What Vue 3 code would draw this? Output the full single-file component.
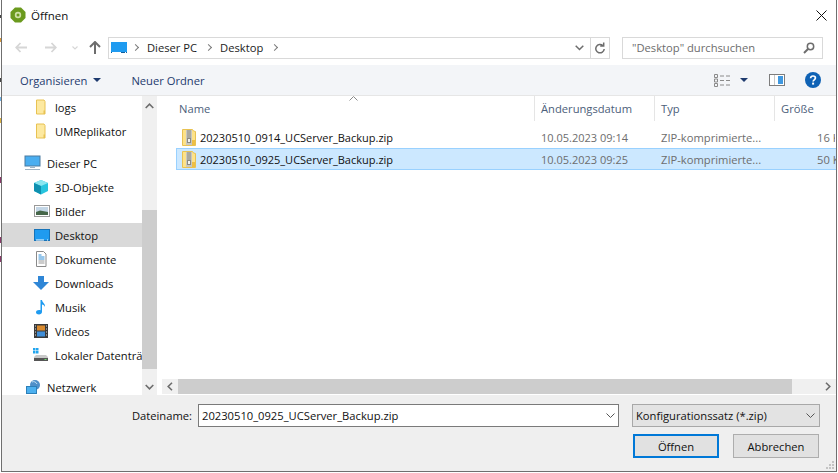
<template>
  <div class="screen">
    <div class="dialog">
      <div class="titlebar">
        <svg class="app-icon" width="16" height="16" viewBox="0 0 16 16">
          <path d="M5 .5h6L15.500 5v6L11 15.500H5L.5 11V5z" fill="#6b9a1e" />
          <circle cx="8" cy="8" r="3.200" fill="#cfe0a8" />
          <circle cx="8" cy="8" r="1.500" fill="#6b9a1e" />
        </svg>
        <span class="title">Öffnen</span>
        <svg class="close" width="11" height="11" viewBox="0 0 11 11">
          <path d="M.5.5l10 10M10.500.5l-10 10" stroke="#111" stroke-width="1" fill="none" />
        </svg>
      </div>

      <div class="navbar">
        <svg class="nav-arrow" width="12" height="11" viewBox="0 0 12 11">
          <path d="M5.500 1L1.200 5.500 5.500 10M1.500 5.500H12" fill="none" stroke="#d6d6d6" stroke-width="1.800" />
        </svg>
        <svg class="nav-arrow fwd" width="12" height="11" viewBox="0 0 12 11">
          <path d="M6.500 1l4.300 4.500L6.500 10M10.500 5.500H0" fill="none" stroke="#d6d6d6" stroke-width="1.800" />
        </svg>
        <svg class="nav-drop" width="6" height="4" viewBox="0 0 6 4">
          <path d="M.5.500L3 3 5.500.5" fill="none" stroke="#d6d6d6" stroke-width="1.100" />
        </svg>
        <svg class="nav-up" width="12" height="13" viewBox="0 0 12 13">
          <path d="M1 6l5-5 5 5M6 1.500V13" fill="none" stroke="#6d6d6d" stroke-width="2" />
        </svg>
        <div class="address">
          <svg class="desk-icon" width="16" height="12" viewBox="0 0 16 12">
            <rect width="16" height="11" fill="#1f9bf0" />
            <rect y="10" width="16" height="1" fill="#0f5f9c" />
            <rect x="1" y="10" width="9" height="1" fill="#fff" />
            <rect x="14" y="10" width="1" height="1" fill="#fff" />
          </svg>
          <span class="crumb-sep first"></span>
          <span class="crumb">Dieser PC</span>
          <span class="crumb-sep"></span>
          <span class="crumb">Desktop</span>
          <span class="crumb-sep"></span>
          <span class="address-space"></span>
          <svg class="addr-drop" width="9" height="6" viewBox="0 0 9 6">
            <path d="M.7.700l3.800 3.800L8.300.7" fill="none" stroke="#6d6d6d" stroke-width="1.500" />
          </svg>
          <span class="addr-refresh">
            <svg width="10" height="12" viewBox="0 0 10 12">
              <path d="M7.800 3.500A4.200 4.200 0 1 0 9.200 7M8.700 .5V4H5.200" fill="none" stroke="#6d6d6d" stroke-width="1.500" />
            </svg>
          </span>
        </div>
        <div class="search">
          <span>"Desktop" durchsuchen</span>
          <svg width="12" height="12" viewBox="0 0 12 12">
            <circle cx="7.500" cy="4.500" r="3.200" fill="none" stroke="#6d6d6d" stroke-width="1.500" />
            <path d="M5 7L1 11" stroke="#6d6d6d" stroke-width="2" />
          </svg>
        </div>
      </div>

      <div class="toolbar">
        <span class="tool-btn">Organisieren<i class="caret"></i></span>
        <span class="tool-btn new-folder">Neuer Ordner</span>
        <span class="tool-space"></span>
        <svg class="view-icon" width="17" height="13" viewBox="0 0 17 13">
          <path d="M.5.500h3v3h-3zM.5 5h3v3h-3zM.5 9.500h3v3h-3z" fill="none" stroke="#8a8a8a" />
          <path d="M6 2h4M12 2h4M6 6.500h4M12 6.500h4M6 11h4M12 11h4" stroke="#8a8a8a" />
        </svg>
        <i class="caret view-caret"></i>
        <svg class="pane-icon" width="16" height="12" viewBox="0 0 16 12">
          <rect x=".5" y=".5" width="15" height="11" fill="#fff" stroke="#7d7d7d" />
          <rect x="9" y="2" width="5" height="8" fill="#3f98e0" />
          <path d="M5.500 1v10" stroke="#c8c8c8" />
        </svg>
        <svg class="help-icon" width="16" height="16" viewBox="0 0 16 16">
          <circle cx="8" cy="8" r="8" fill="#0f62b5" />
          <path d="M5.600 6.200C5.700 4.700 6.700 4 8 4c1.400 0 2.400.8 2.400 2 0 1.800-2.300 1.800-2.300 3.600" fill="none" stroke="#fff" stroke-width="1.700" />
          <rect x="7.100" y="10.600" width="2" height="2" fill="#fff" />
        </svg>
      </div>

      <div class="main">
        <div class="tree">
          <div class="tree-items">
            <div v-for="item in treeItems" :key="item.label" class="tree-item" :class="[item.kind, { active: item.active }]">
              <svg class="tree-icon" width="18" height="16" viewBox="0 0 18 16" v-html="icons[item.icon]"></svg>
              <span>{{ item.label }}</span>
            </div>
          </div>
          <div class="tree-scroll">
            <svg class="scroll-btn" width="9" height="6" viewBox="0 0 9 6">
              <path d="M.7 5l3.800-3.800L8.300 5" fill="none" stroke="#6d6d6d" stroke-width="1.600" />
            </svg>
            <div class="tree-track"><div class="tree-thumb"></div></div>
            <svg class="scroll-btn" width="9" height="6" viewBox="0 0 9 6">
              <path d="M.7 1l3.800 3.800L8.300 1" fill="none" stroke="#6d6d6d" stroke-width="1.600" />
            </svg>
          </div>
        </div>

        <div class="files">
          <svg class="sort" width="9" height="5" viewBox="0 0 9 5">
            <path d="M.5 4.500l4-4 4 4" fill="none" stroke="#8a8a8a" />
          </svg>
          <div class="file-head">
            <div v-for="col in columns" :key="col.label" class="col" :class="col.cls">{{ col.label }}</div>
          </div>
          <div class="file-rows">
            <div v-for="file in files" :key="file.name" class="file" :class="{ selected: file.selected }">
              <div class="col c-name">
                <svg width="14" height="17" viewBox="0 0 14 17">
                  <path d="M.5.500h10l1 1.500 2 .5v14H.5z" fill="#fde28a" stroke="#e8c252" />
                  <rect x="10" y="11" width="3" height="5" fill="#eebf45" />
                  <rect x="4" y="1" width="6" height="15" fill="#c9c8c0" />
                  <path d="M5 2h4M5 4h4M5 6h4M5 8h4" stroke="#8b8a80" />
                  <rect x="5.500" y="9.500" width="3" height="4" fill="#f2f2ee" stroke="#8b8a80" />
                </svg>
                <span>{{ file.name }}</span>
              </div>
              <div class="col c-date">{{ file.date }}</div>
              <div class="col c-type">ZIP-komprimierte...</div>
              <div class="col c-size">{{ file.size }}</div>
            </div>
          </div>
          <div class="hscroll">
            <svg class="h-btn" width="6" height="9" viewBox="0 0 6 9">
              <path d="M5 .7L1.200 4.500 5 8.300" fill="none" stroke="#6d6d6d" stroke-width="1.600" />
            </svg>
            <div class="h-track"><div class="h-thumb"></div></div>
            <svg class="h-btn" width="6" height="9" viewBox="0 0 6 9">
              <path d="M1 .7l3.800 3.800L1 8.300" fill="none" stroke="#6d6d6d" stroke-width="1.600" />
            </svg>
          </div>
        </div>
      </div>

      <div class="footer">
        <div class="file-line">
          <label>Dateiname:</label>
          <div class="name-input">
            <span>20230510_0925_UCServer_Backup.zip</span>
            <svg width="9" height="5" viewBox="0 0 9 5">
              <path d="M.5.500l4 4 4-4" fill="none" stroke="#555" />
            </svg>
          </div>
          <div class="filter">
            <span>Konfigurationssatz (*.zip)</span>
            <svg width="9" height="5" viewBox="0 0 9 5">
              <path d="M.5.500l4 4 4-4" fill="none" stroke="#555" />
            </svg>
          </div>
        </div>
        <div class="buttons">
          <button class="primary">Öffnen</button>
          <button>Abbrechen</button>
        </div>
        <svg class="grip" width="8" height="8" viewBox="0 0 8 8">
          <path d="M6 0h2v2H6zM3 3h2v2H3zM6 3h2v2H6zM0 6h2v2H0zM3 6h2v2H3zM6 6h2v2H6z" fill="#c4c4c4" />
        </svg>
      </div>
    </div>
  </div>
</template>

<script setup>
const icons = {
  folder: '<path d="M4.500 1h7.500l1 1.500V15h-8.500z" fill="#fde9a0" stroke="#e8c252"/><path d="M11.500 11.500h1.500V15h-1.500z" fill="#e8c252"/>',
  pc: '<rect x="1" y="1" width="15" height="10" fill="#4aaef0" stroke="#4a7aa0"/><path d="M6 12h5v1H6zM1 14h15v1H1z" fill="#a0b4c4"/>',
  cube: '<path d="M9 1l7 3v8l-7 3.500L2 12V4z" fill="#27c4de"/><path d="M9 1l7 3-7 3-7-3z" fill="#8be6f0"/><path d="M2 4l7 3v8.500L2 12z" fill="#0f90b0"/>',
  pics: '<rect x="2.500" y="2.500" width="15" height="11" fill="#fff" stroke="#999"/><rect x="4" y="4" width="12" height="8" fill="#c3d6e6"/><path d="M4 9l4-1.500 8 1.500v3H4z" fill="#46674a"/>',
  desk: '<rect x="2.500" y="2.500" width="15" height="11" fill="#1f9bf0" stroke="#1673b8"/><path d="M4 13h8M15 13h1" stroke="#fff"/>',
  doc: '<path d="M4.500.500h7l2.500 2.500v12.500H4.500z" fill="#fff" stroke="#8a8a8a"/><path d="M6.500 4h3M6.500 6h6M6.500 8h6" stroke="#2f8ed8"/><path d="M6.500 10h6M6.500 12h6" stroke="#999"/>',
  down: '<path d="M6 1h6v6h5L9 15 1 7h5z" fill="#2f86d6"/>',
  music: '<path d="M8.500 1h1.500c.3 3 3.500 3.500 3 7-.5-1.500-1.700-2.200-3-2.500V13c0 1.600-1.500 2.500-3 2.500S4 14.500 4 13.200s1.500-2.200 3-2.200c.6 0 1.100.1 1.500.3z" fill="#1f9bf0"/>',
  video: '<rect x="2" y="1" width="14" height="14" fill="#3a3a3a"/><rect x="5" y="2.500" width="8" height="5" fill="#d98a2e"/><rect x="5" y="8.500" width="8" height="5" fill="#3f8ed8"/><path d="M3 3h1M3 6h1M3 9h1M3 12h1M14 3h1M14 6h1M14 9h1M14 12h1" stroke="#ddd"/>',
  drive: '<path d="M1 1h2.500v2.500H1zM4 1h2.500v2.500H4zM1 4h2.500v2.500H1zM4 4h2.500v2.500H4z" fill="#22a5ee"/><path d="M2 10l2-2h10l2 2v4H2z" fill="#c9c9c9"/><rect x="2" y="11" width="14" height="3" fill="#555"/><rect x="12.500" y="12" width="2" height="1" fill="#6fe06f"/>',
  net: '<circle cx="11" cy="6" r="5" fill="#4f8fc8"/><path d="M8 3c2-1 4 0 5 2" stroke="#bfe0f5" fill="none"/><rect x="2.500" y="7.500" width="10" height="7" fill="#4cb0ef" stroke="#2c7fb8"/>'
}

const treeItems = [
  { label: 'logs', icon: 'folder', kind: 'child' },
  { label: 'UMReplikator', icon: 'folder', kind: 'child' },
  { label: 'Dieser PC', icon: 'pc', kind: 'root gap' },
  { label: '3D-Objekte', icon: 'cube', kind: 'child' },
  { label: 'Bilder', icon: 'pics', kind: 'child' },
  { label: 'Desktop', icon: 'desk', kind: 'child', active: true },
  { label: 'Dokumente', icon: 'doc', kind: 'child' },
  { label: 'Downloads', icon: 'down', kind: 'child' },
  { label: 'Musik', icon: 'music', kind: 'child' },
  { label: 'Videos', icon: 'video', kind: 'child' },
  { label: 'Lokaler Datenträ', icon: 'drive', kind: 'child' },
  { label: 'Netzwerk', icon: 'net', kind: 'root gap' }
]

const columns = [
  { label: 'Name', cls: 'c-name' },
  { label: 'Änderungsdatum', cls: 'c-date' },
  { label: 'Typ', cls: 'c-type' },
  { label: 'Größe', cls: 'c-size' }
]

const files = [
  { name: '20230510_0914_UCServer_Backup.zip', date: '10.05.2023 09:14', size: '16 KB' },
  { name: '20230510_0925_UCServer_Backup.zip', date: '10.05.2023 09:25', size: '50 KB', selected: true }
]
</script>

<style>
html, body {
  margin: 0;
  background: #fff;
  overflow: hidden;
}
</style>

<style scoped>
/* the desktop behind the dialog only shows as a 1px sliver on the left */
.screen {
  width: 838px;
  height: 473px;
  overflow: hidden;
  background:
    linear-gradient(#fff 15px, #444 15px 18px, #fff 18px 38px, #d99a3c 38px 42px, #fff 42px 78px, #444 78px 82px, #fff 82px 97px, #6fb3e8 97px 101px, #fff 101px 118px, #d9b040 118px 123px, #fff 123px 177px, #8a3a6a 177px 183px, #fff 183px 237px, #8a3a6a 237px 243px, #fff 243px 256px, #8a3a6a 256px 262px, #fff 262px) left top / 1px 100% no-repeat,
    #fff;
  font-family: "Open Sans", "Noto Sans", sans-serif;
  font-size: 11.2px;
  color: #111;
}

.dialog {
  width: 836px;
  height: 472px;
  margin-left: 1px;
  box-sizing: border-box;
  background: #fff;
  border: 1px solid #6f6f6f;
  border-top: 0;
  display: flex;
  flex-direction: column;
  overflow: hidden;
}

.titlebar {
  height: 30px;
  display: flex;
  align-items: center;
  padding-left: 8px;
  flex: none;
}

.title {
  margin-left: 5px;
  font-size: 11.5px;
}

.close {
  margin-left: auto;
  margin-right: 9px;
}

.navbar {
  height: 35px;
  flex: none;
  display: flex;
  align-items: center;
  padding-left: 13px;
}

.nav-arrow {
  margin-right: 18px;
}

.nav-arrow.fwd {
  margin-right: 15px;
}

.nav-drop {
  margin-right: 11px;
}

.nav-up {
  margin-right: 7px;
}

.address {
  width: 502px;
  height: 22px;
  box-sizing: border-box;
  border: 1px solid #d9d9d9;
  display: flex;
  align-items: center;
  padding-left: 2px;
}

.crumb {
  color: #1c1c1c;
}

.crumb-sep {
  width: 4px;
  height: 4px;
  border-top: 1.500px solid #7a7a7a;
  border-right: 1.500px solid #7a7a7a;
  transform: rotate(45deg);
  margin: 0 9px 0 9px;
}

.crumb-sep.first {
  margin-left: 6px;
}

.address-space {
  flex: 1;
}

.addr-drop {
  margin-right: 6px;
}

.addr-refresh {
  width: 18px;
  height: 20px;
  border-left: 1px solid #d9d9d9;
  display: flex;
  align-items: center;
  justify-content: center;
}

.search {
  width: 201px;
  height: 22px;
  margin-left: 12px;
  box-sizing: border-box;
  border: 1px solid #d9d9d9;
  display: flex;
  align-items: center;
  justify-content: space-between;
  padding: 0 7px 0 9px;
  color: #6d6d6d;
}

.toolbar {
  height: 31px;
  flex: none;
  background: #f3f5f8;
  border-bottom: 1px solid #e6e6e6;
  box-sizing: border-box;
  display: flex;
  align-items: center;
  padding-left: 18px;
  color: #1e3a6e;
}

.tool-btn {
  display: flex;
  align-items: center;
}

.new-folder {
  margin-left: 30px;
}

.caret {
  width: 0;
  height: 0;
  border-left: 4px solid transparent;
  border-right: 4px solid transparent;
  border-top: 4px solid #1e3a6e;
  margin-left: 6px;
}

.tool-space {
  flex: 1;
}

.view-caret {
  margin: 0 21px 0 9px;
}

.pane-icon {
  margin-right: 20px;
}

.help-icon {
  margin-right: 15px;
}

.main {
  height: 299px;
  flex: none;
  display: flex;
  background: #fff;
}

.tree {
  width: 155px;
  flex: none;
  display: flex;
  overflow: hidden;
}

.tree-items {
  width: 140px;
  flex: none;
  overflow: hidden;
  margin-top: -1px;
}

.tree-item {
  height: 24px;
  display: flex;
  align-items: center;
  white-space: nowrap;
}

.tree-item.child {
  padding-left: 30px;
}

.tree-item.root {
  padding-left: 22px;
}

.tree-item.gap {
  margin-top: 8px;
}

.tree-item.active {
  background: #d9d9d9;
}

.tree-icon {
  flex: none;
  margin-right: 5px;
}

.tree-scroll {
  width: 15px;
  flex: none;
  background: #f0f0f0;
  display: flex;
  flex-direction: column;
  align-items: center;
  padding: 7px 0 5px;
  box-sizing: border-box;
}

.scroll-btn {
  flex: none;
}

.tree-track {
  flex: 1;
  width: 15px;
  display: flex;
  flex-direction: column;
  justify-content: flex-end;
  padding-bottom: 15px;
}

.tree-thumb {
  height: 159px;
  background: #cdcdcd;
}

.files {
  flex: 1;
  min-width: 0;
  margin-left: 3px;
  display: flex;
  flex-direction: column;
  position: relative;
  overflow: hidden;
}

.sort {
  position: absolute;
  left: 189px;
  top: 0;
}

.file-head {
  height: 25px;
  display: flex;
  flex: none;
  color: #4c607a;
}

.file-head .col {
  border-right: 1px solid #e5e5e5;
  box-sizing: border-box;
  display: flex;
  align-items: center;
}

.file-head .c-size {
  border-right: 0;
}

.file-head .c-name {
  width: 375px;
  padding-left: 19px;
}

.col {
  flex: none;
  white-space: nowrap;
  overflow: hidden;
}

.c-name {
  width: 358px;
  padding-left: 5px;
  display: flex;
  align-items: center;
  gap: 4px;
  box-sizing: border-box;
}

.c-date,
.c-type {
  width: 120px;
  padding-left: 6px;
  box-sizing: border-box;
}

.c-size {
  flex: 1;
  padding-left: 6px;
}

.file-rows {
  flex: 1;
  padding-top: 5px;
  min-height: 0;
}

.file {
  height: 22px;
  margin-left: 16px;
  display: flex;
  align-items: center;
  box-sizing: border-box;
  border: 1px solid transparent;
  color: #6d6d6d;
}

.file .c-name {
  color: #111;
  font-size: 11px;
}

.file .c-date {
  font-size: 11px;
}

.file .c-size {
  padding-left: 42px;
}

.file.selected {
  background: #cce8ff;
  border-color: #99d1ff;
  border-right: 0;
}

.hscroll {
  height: 15px;
  flex: none;
  margin: 0 0 1px 2px;
  background: #f0f0f0;
  display: flex;
  align-items: center;
}

.h-btn {
  flex: none;
  margin: 0 5px;
}

.h-track {
  flex: 1;
  height: 15px;
}

.h-thumb {
  height: 15px;
  width: 614px;
  background: #cdcdcd;
}

.footer {
  flex: 1;
  background: #efefef;
  padding: 9px 16px 0 0;
  display: flex;
  flex-direction: column;
  position: relative;
}

.file-line {
  display: flex;
  align-items: center;
  justify-content: flex-end;
}

.file-line label {
  margin-right: 6px;
}

.name-input,
.filter {
  height: 23px;
  box-sizing: border-box;
  display: flex;
  align-items: center;
  justify-content: space-between;
}

.name-input {
  width: 421px;
  background: #fff;
  border: 1px solid #7a7a7a;
  padding: 0 3px;
}

.filter {
  width: 188px;
  margin-left: 13px;
  background: #e3e3e3;
  border: 1px solid #a8a8a8;
  padding: 0 4px 0 3px;
}

.buttons {
  display: flex;
  justify-content: flex-end;
  gap: 14px;
  margin: 7px 1px 0 0;
}

.buttons button {
  width: 86px;
  height: 24px;
  font: inherit;
  color: #111;
  background: #e1e1e1;
  border: 1px solid #adadad;
  padding: 0;
}

.buttons .primary {
  border: 2px solid #0078d7;
}

.grip {
  position: absolute;
  right: 2px;
  bottom: 2px;
}
</style>
